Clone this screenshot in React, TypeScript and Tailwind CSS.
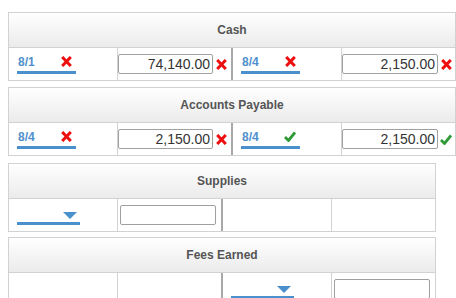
import React from "react";

const XMark = () => (
  <svg width="11" height="11" viewBox="0 0 11 11" className="shrink-0">
    <path d="M1.2 1 L9.8 10 M9.8 1 L1.2 10" stroke="#ee0f0f" strokeWidth="3" strokeLinecap="butt" />
  </svg>
);

const Check = () => (
  <svg width="12" height="11" viewBox="0 0 12 11" className="shrink-0">
    <path d="M1 6 L4.5 9.5 L11 1.5" stroke="#2e9a36" strokeWidth="2.8" fill="none" />
  </svg>
);

const Arrow = () => (
  <svg width="14" height="7" viewBox="0 0 14 7" className="shrink-0">
    <path d="M0 0 H14 L7 7 Z" fill="#4a90cc" />
  </svg>
);

type Mark = "x" | "check" | null;

const MarkIcon = ({ m }: { m: Mark }) =>
  m === "x" ? <XMark /> : m === "check" ? <Check /> : null;

const Drop = ({ text, mark, w }: { text?: string; mark?: Mark; w: string }) => (
  <div className={`relative h-[24px] ${w} border-b-[3px] border-[#4a90cc] flex items-end justify-between pb-[1px]`}>
    <span className="text-[12px] font-bold text-[#4f8fcb] leading-none pl-[1px] pb-[2px]">{text}</span>
    {mark ? (
      <span className="mr-[4px] mb-[3px]">
        <MarkIcon m={mark} />
      </span>
    ) : (
      <span className="mr-[3px] mb-[2px]">
        <Arrow />
      </span>
    )}
  </div>
);

const Input = ({ value, w }: { value?: string; w: string }) => (
  <div
    className={`h-[20px] ${w} border border-[#a0a0a0] rounded-[2px] bg-white flex items-center justify-end pr-[2px] text-[14px] text-[#333] leading-none`}
  >
    {value}
  </div>
);

type Cell = React.ReactNode;

const TTable = ({
  title,
  widths,
  cells,
  wide,
}: {
  title: string;
  widths: string[];
  cells: Cell[];
  wide: boolean;
}) => (
  <div className={`${wide ? "w-[448px]" : "w-[428px]"} border border-[#d2d2d2] bg-white`}>
    <div className="h-[35px] border-b border-[#d2d2d2] bg-gradient-to-b from-[#ffffff] to-[#ebebeb] flex items-center justify-center text-[12px] font-bold text-[#555]">
      {title}
    </div>
    <div className="h-[32px] flex">
      {cells.map((c, i) => (
        <div
          key={i}
          className={`${widths[i]} h-full flex items-center ${
            i === 1 ? "border-r-2 border-[#a8a8a8]" : i < 3 ? "border-r border-[#d2d2d2]" : ""
          }`}
        >
          {c}
        </div>
      ))}
    </div>
  </div>
);

const DropCell = (props: { text?: string; mark?: Mark; w: string }) => (
  <div className="pl-[8px] self-start pt-[2px]">
    <Drop {...props} />
  </div>
);

export default function App() {
  const wideW = ["w-[109px]", "w-[115px]", "w-[109px]", "w-[113px]"];
  const narrowW = ["w-[109px]", "w-[105px]", "w-[109px]", "w-[103px]"];
  return (
    <div
      className="w-[456px] h-[298px] overflow-hidden bg-white pl-[8px] pt-[12px] flex flex-col"
      style={{ fontFamily: '"Liberation Sans", Arial, sans-serif' }}
    >
      <TTable
        title="Cash"
        wide
        widths={wideW}
        cells={[
          <DropCell text="8/1" mark="x" w="w-[59px]" />,
          <div className="flex items-center pl-[0px] gap-[3px]"><Input value="74,140.00" w="w-[95px]" /><XMark /></div>,
          <DropCell text="8/4" mark="x" w="w-[59px]" />,
          <div className="flex items-center gap-[3px]"><Input value="2,150.00" w="w-[96px]" /><XMark /></div>,
        ]}
      />
      <div className="mt-[6px]">
        <TTable
          title="Accounts Payable"
          wide
          widths={wideW}
          cells={[
            <DropCell text="8/4" mark="x" w="w-[59px]" />,
            <div className="flex items-center gap-[3px]"><Input value="2,150.00" w="w-[95px]" /><XMark /></div>,
            <DropCell text="8/4" mark="check" w="w-[59px]" />,
            <div className="flex items-center gap-[2px]"><Input value="2,150.00" w="w-[96px]" /><Check /></div>,
          ]}
        />
      </div>
      <div className="mt-[7px]">
        <TTable
          title="Supplies"
          wide={false}
          widths={narrowW}
          cells={[
            <DropCell w="w-[63px]" />,
            <div className="pl-[2px]"><Input w="w-[96px]" /></div>,
            <div />,
            <div />,
          ]}
        />
      </div>
      <div className="mt-[5px]">
        <TTable
          title="Fees Earned"
          wide={false}
          widths={narrowW}
          cells={[
            <div />,
            <div />,
            <DropCell w="w-[63px]" />,
            <div className="pl-[2px]"><Input w="w-[96px]" /></div>,
          ]}
        />
      </div>
    </div>
  );
}
